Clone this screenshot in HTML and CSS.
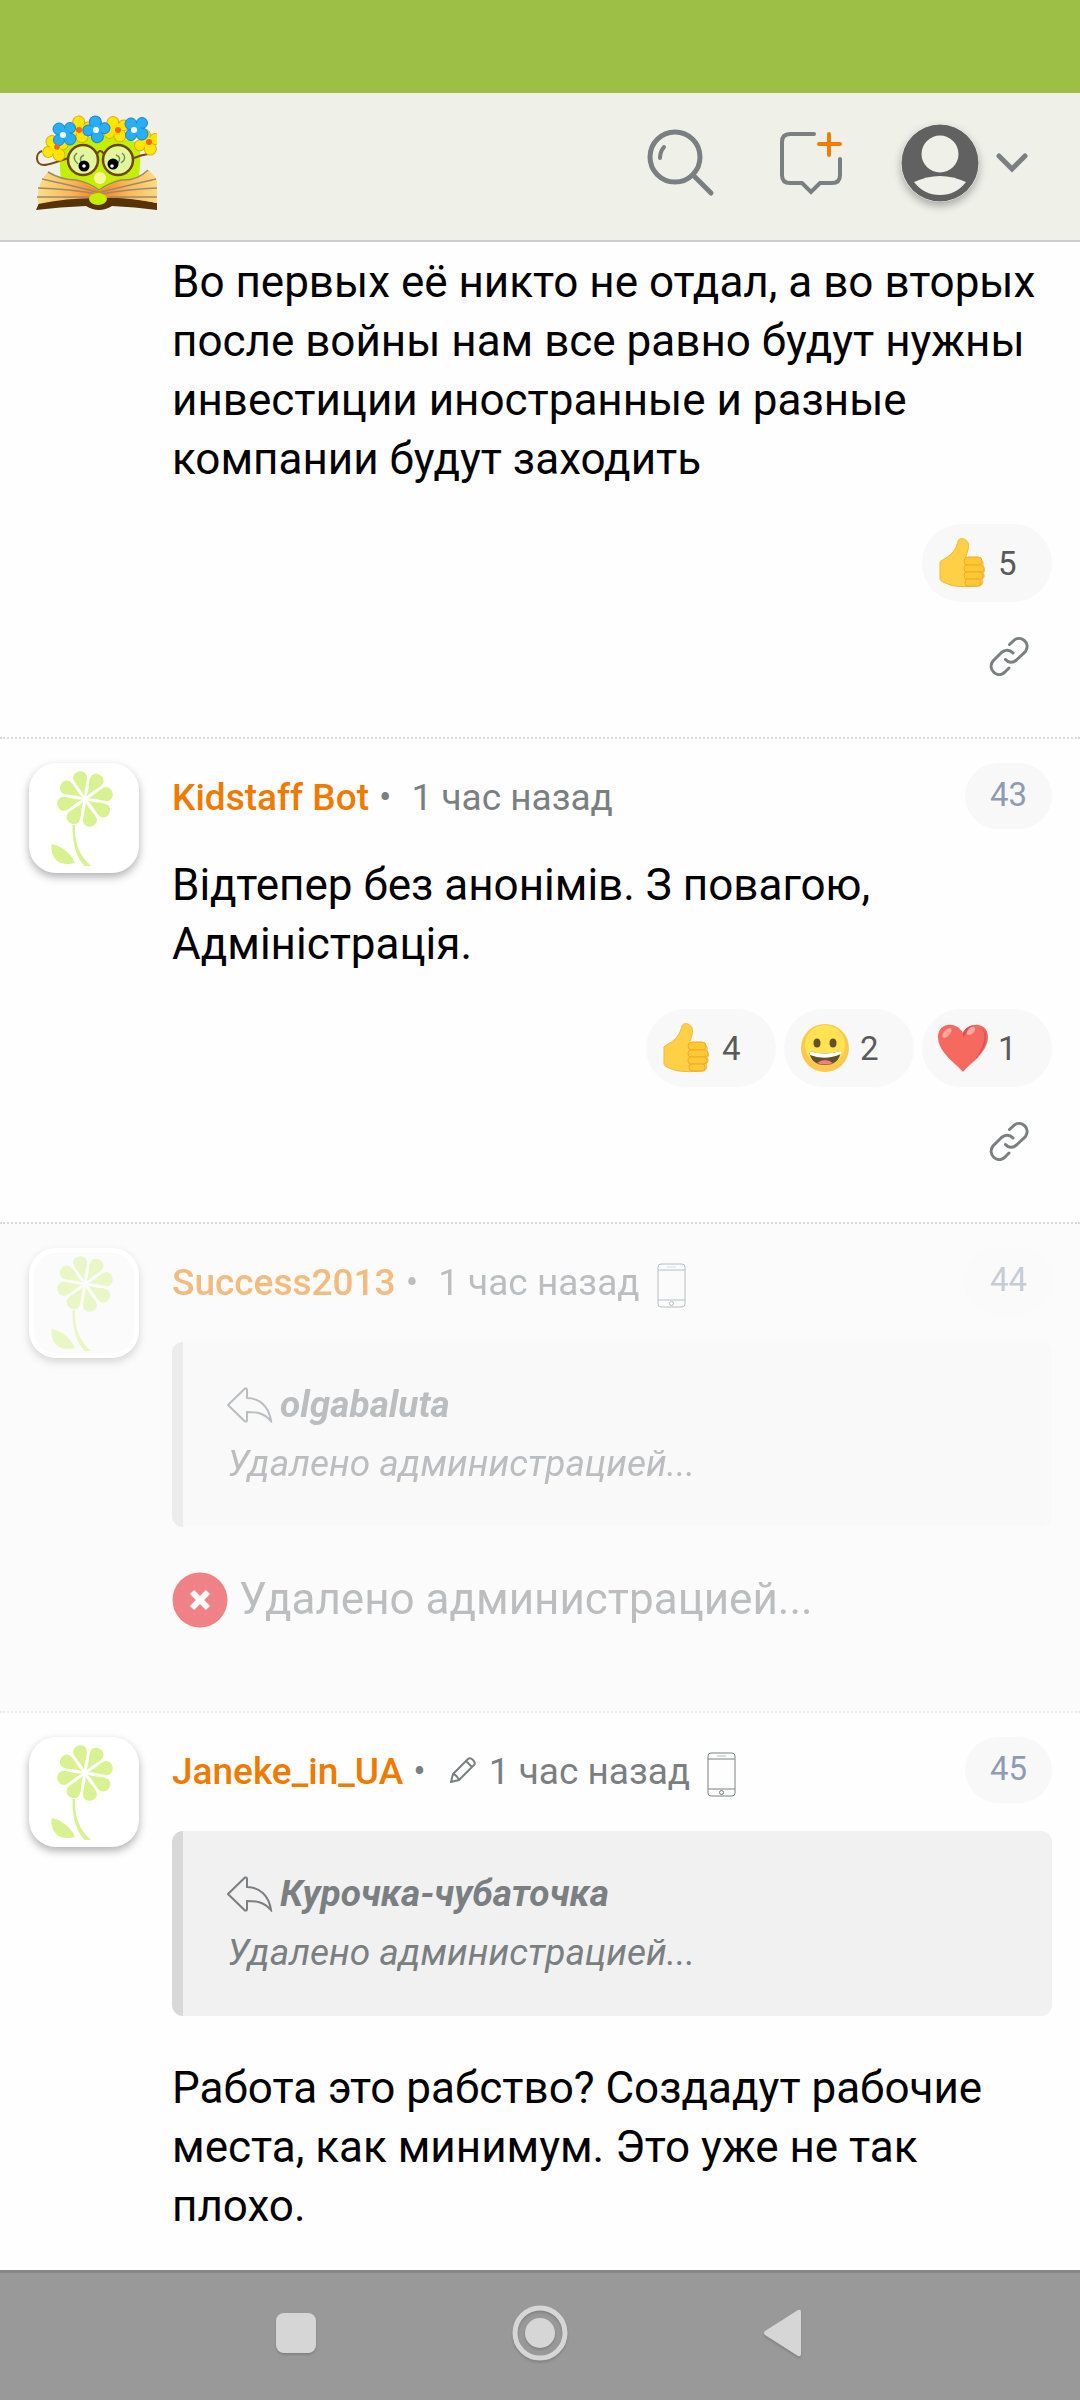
FILE: index.html
```
<!DOCTYPE html>
<html lang="ru">
<head>
    <meta charset="UTF-8">
    <meta name="viewport" content="width=device-width, initial-scale=1.0">
    <title>Kidstaff — форум</title>
    <link rel="stylesheet" href="styles.css">
</head>
<body>
    <!-- общие иконки -->
    <svg class="sprite" aria-hidden="true">
        <symbol id="i-flower" viewBox="0 0 110 110">
            <g transform="rotate(-13 56 36)">
                <path id="petal" d="M56 33 C54 24 49 19 49 13 A7.300 7.300 0 0 1 63 13 C63 19 58 24 56 33Z"/>
                <use href="#petal" transform="rotate(45 56 36)"/>
                <use href="#petal" transform="rotate(90 56 36)"/>
                <use href="#petal" transform="rotate(135 56 36)"/>
                <use href="#petal" transform="rotate(180 56 36)"/>
                <use href="#petal" transform="rotate(225 56 36)"/>
                <use href="#petal" transform="rotate(270 56 36)"/>
                <use href="#petal" transform="rotate(315 56 36)"/>
            </g>
            <path d="M43.500 62 C43 82 48 95 55.500 103 H62 C51 93 45 80 46 62Z"/>
            <path d="M22.500 81 C34 83 43 92 46 100 C32 104 21 97 22.500 81Z"/>
        </symbol>
        <symbol id="i-link" viewBox="0 0 40 40">
            <path d="M20.500 8.500 L25.500 3.900 C32-1 42 7 36.500 15.500 L27.500 24 C23.500 27.500 19 26.500 16.500 23.500 M24 17 C20.500 13.500 16 13.500 12.500 16.500 L4 25 C-2 33 8 43 15.500 36.500 L20 32"/>
        </symbol>
        <symbol id="i-thumb" viewBox="0 0 48 50">
            <path d="M1 24 C4 21 8 20 11 17 C16 13 18 7 19 3 C20-1 29 0 29.500 7 C30 12 27 17 26 22 H40 C45 22 45 27 43 28 C46 30 46 34 44 35 C46 37 45 40 43 41 C45 44 43 48 40 48 C28 49 14 49 9 46 C3 44 1 43 1 40Z" fill="#ffd046" stroke="#f3b93c" stroke-width="1"/>
            <g fill="#ffc832" stroke="#edac2e" stroke-width="1">
                <rect x="25" y="19" width="18" height="8" rx="4"/>
                <rect x="25" y="27" width="20" height="7" rx="3"/>
                <rect x="25" y="34" width="19" height="7" rx="3"/>
                <rect x="26" y="41" width="16" height="7" rx="3"/>
            </g>
        </symbol>
        <symbol id="i-phone" viewBox="0 0 30 46">
            <rect x="1" y="1" width="27" height="43" rx="3"/>
            <path d="M1 7 H28 M1 37 H28"/>
            <path d="M10 4 H19" opacity=".5"/>
            <circle cx="14.500" cy="40.500" r="2"/>
        </symbol>
        <symbol id="i-reply" viewBox="0 0 46 36">
            <path d="M1 18 L18 1.500 Q20 1 20 3 V11 C33 11 42 20 44 34 C37 26 30 25 20 25 V33 Q20 35 18 34.500Z"/>
        </symbol>
    </svg>

    <div class="status-bar"></div>

    <header class="header">
        <a class="logo" href="#" aria-label="Kidstaff">
            <svg viewBox="0 0 122 96">
                <defs>
                    <radialGradient id="pages" gradientUnits="userSpaceOnUse" cx="64" cy="78" r="60">
                        <stop offset="0" stop-color="#ff7a18"/>
                        <stop offset=".5" stop-color="#fbb95c"/>
                        <stop offset="1" stop-color="#fbdc84"/>
                    </radialGradient>
                    <g id="fl">
                        <circle cx="-5" cy="-5" r="6"/><circle cx="6" cy="-6" r="5.500"/>
                        <circle cx="-5" cy="6" r="5.500"/><circle cx="6" cy="5" r="6"/>
                        <circle r="5.500" stroke="none"/>
                    </g>
                </defs>
                <path d="M25 28 Q64 14 104 28 Q107 45 103 66 L65 84 L26 66 Q24 45 25 28Z" fill="#c3f000"/>
                <path d="M7 36 C0 38 0 50 9 50 Q14 50 33 43 M99 43 Q106 40 113 39" fill="none" stroke="#7a4a14" stroke-width="2"/>
                <path d="M1 95 L4 88 Q25 83 55 82 H75 Q100 83 122 88 V95 Q100 92 77 91 Q64 99 51 91 Q25 92 1 95Z" fill="#563408"/>
                <path d="M13 57 Q26 63 41 65 Q55 70 64 76 Q74 70 86 65 Q102 64 113 55 Q119 59 122 65 V88 Q90 82 64 83 Q30 83 3 89 Q1 69 13 57Z" fill="url(#pages)"/>
                <path d="M13 57 Q26 65 41 65 Q55 68 64 75 Q74 68 86 65 Q102 66 113 55 M7 64 Q35 70 62 77 M3 73 Q35 74 62 79 M2 82 H56 M66 77 Q95 70 121 64 M66 79 Q95 74 122 73 M74 82 H122" fill="none" stroke="#9b8b6c" stroke-width="1.500"/>
                <ellipse cx="63" cy="84" rx="9" ry="6" fill="#c3f000"/>
                <circle cx="65" cy="63" r="6" fill="#fff49a"/>
                <g fill="#e2f79b" stroke="#6f4510" stroke-width="2.500">
                    <circle cx="48" cy="45" r="15"/><circle cx="83" cy="45" r="15"/>
                </g>
                <path d="M62 39 Q65 33 69 39" fill="none" stroke="#6f4510" stroke-width="2"/>
                <path d="M42 38 Q36 43 43 49 M49 40 Q43 43 47 48 M81 40 Q87 42 83 48 M87 38 Q93 43 86 48" fill="none" stroke="#72895c" stroke-width="1.500"/>
                <circle cx="49" cy="51" r="5.500"/><circle cx="78" cy="49" r="5.500"/>
                <circle cx="49" cy="51" r="1.800" fill="#fff"/><circle cx="77" cy="51" r="1.800" fill="#fff"/>
                <g fill="#ffe600" stroke="#d8b010" stroke-width="1">
                    <use href="#fl" x="20" y="33" transform="rotate(20 20 33)"/>
                    <use href="#fl" x="45" y="14" transform="rotate(35 45 14)"/>
                    <use href="#fl" x="81" y="14" transform="rotate(20 81 14)"/>
                    <use href="#fl" x="112" y="27" transform="rotate(25 112 27)"/>
                </g>
                <g fill="#27aef5" stroke="#1c86cf" stroke-width="1">
                    <use href="#fl" x="29" y="19"/>
                    <use href="#fl" x="61" y="14" transform="rotate(40 61 14)"/>
                    <use href="#fl" x="101" y="14"/>
                </g>
                <g fill="#ff6410">
                    <circle cx="22" cy="32" r="2.800"/><circle cx="44" cy="15" r="3"/><circle cx="83" cy="15" r="3"/><circle cx="114" cy="27" r="3"/>
                </g>
                <g fill="#fff">
                    <circle cx="28" cy="20" r="3"/><circle cx="61" cy="15" r="3"/><circle cx="99" cy="15" r="3"/>
                </g>
            </svg>
        </a>
        <nav class="header-actions">
            <button class="icon-button" aria-label="Поиск">
                <svg width="68" height="68" viewBox="0 0 68 68" fill="none" stroke="#7a7f82" stroke-width="5" stroke-linecap="round">
                    <circle cx="28" cy="28" r="25"/>
                    <path d="M46 46 L64 64"/>
                    <path d="M17 18 Q13 23 13 29" stroke-width="4"/>
                </svg>
            </button>
            <button class="icon-button" aria-label="Новая тема">
                <svg width="64" height="64" viewBox="0 0 64 64" fill="none" stroke="#7a7f82" stroke-width="4" stroke-linecap="round">
                    <path d="M35 3 H11 Q3 3 3 11 V44 Q3 52 11 52 H23 L32 61 L41 52 H53 Q61 52 61 44 V28"/>
                    <path d="M40 13 H61 M50 3 V24" stroke="#f07d00"/>
                </svg>
            </button>
            <button class="icon-button profile" aria-label="Профиль">
                <svg class="profile-pic" width="78" height="78" viewBox="0 0 78 78">
                    <circle cx="39" cy="39" r="38.500" fill="#616161"/>
                    <circle cx="39" cy="30" r="18.500" fill="#eff0e8"/>
                    <path d="M13 58 Q39 46 65 58 Q55 71 39 71 Q23 71 13 58Z" fill="#eff0e8"/>
                </svg>
                <svg width="32" height="20" viewBox="0 0 32 20" fill="none" stroke="#7a7f82" stroke-width="5" stroke-linecap="round">
                    <path d="M3 3 L16 16 L29 3"/>
                </svg>
            </button>
        </nav>
    </header>

    <main class="thread">
        <article class="post post-first">
            <div class="post-content">
                <p class="post-text">Во первых её никто не отдал, а во вторых после войны нам все равно будут нужны инвестиции иностранные и разные компании будут заходить</p>
                <div class="reactions">
                    <button class="reaction"><svg class="emoji"><use href="#i-thumb"/></svg>5</button>
                </div>
                <div class="post-tools">
                    <a class="permalink" href="#42" aria-label="Ссылка"><svg><use href="#i-link"/></svg></a>
                </div>
            </div>
        </article>

        <article class="post" id="43">
            <a class="avatar" href="#"><svg><use href="#i-flower"/></svg></a>
            <div class="post-content">
                <div class="post-head">
                    <a class="author" href="#">Kidstaff Bot</a>
                    <span class="dot">•</span>
                    <span class="date">1 час назад</span>
                    <a class="number" href="#43">43</a>
                </div>
                <p class="post-text">Відтепер без анонімів. З повагою, Адміністрація.</p>
                <div class="reactions">
                    <button class="reaction"><svg class="emoji"><use href="#i-thumb"/></svg>4</button>
                    <button class="reaction">
                        <svg class="emoji" viewBox="0 0 50 50">
                            <circle cx="25" cy="25" r="24" fill="#fbc94b"/>
                            <circle cx="25" cy="22" r="20" fill="#ffe352"/>
                            <ellipse cx="17" cy="20" rx="3.500" ry="4.500" fill="#63502b"/>
                            <ellipse cx="33" cy="20" rx="3.500" ry="4.500" fill="#63502b"/>
                            <path d="M9 28 Q25 33 41 28 Q39 42 25 42 Q11 42 9 28Z" fill="#63502b"/>
                            <path d="M9 28 Q25 33 41 28 V31 Q25 38 10 32Z" fill="#fff"/>
                            <path d="M17 40 Q25 34 33 40 Q25 43 17 40Z" fill="#f08080"/>
                        </svg>2
                    </button>
                    <button class="reaction">
                        <svg class="emoji" viewBox="0 0 50 50">
                            <path d="M25 49 C20 42 0 30 0 14 C0-1 19-2 25 10 C31-2 50-1 50 14 C50 30 30 42 25 49Z" fill="#f5695f"/>
                            <path d="M25 10 C27 5 31 3 35 2 C31 6 28 10 25 15Z M44 4 C54 15 44 30 35 39 C43 29 50 16 44 4Z" fill="#d9535a"/>
                            <ellipse cx="9" cy="10" rx="3" ry="6" fill="#ffa59b" transform="rotate(42 9 10)"/>
                            <ellipse cx="33" cy="8" rx="3" ry="5" fill="#ffa59b" transform="rotate(50 33 8)"/>
                        </svg>1
                    </button>
                </div>
                <div class="post-tools">
                    <a class="permalink" href="#43" aria-label="Ссылка"><svg><use href="#i-link"/></svg></a>
                </div>
            </div>
        </article>

        <article class="post post-deleted" id="44">
            <a class="avatar" href="#"><svg><use href="#i-flower"/></svg></a>
            <div class="post-content">
                <div class="post-head">
                    <a class="author" href="#">Success2013</a>
                    <span class="dot">•</span>
                    <span class="date">1 час назад</span>
                    <svg class="phone"><use href="#i-phone"/></svg>
                    <a class="number" href="#44">44</a>
                </div>
                <blockquote class="quote">
                    <div class="quote-author"><svg><use href="#i-reply"/></svg>olgabaluta</div>
                    <p>Удалено администрацией...</p>
                </blockquote>
                <p class="post-text removed">
                    <svg width="56" height="56" viewBox="0 0 56 56">
                        <circle cx="28" cy="28" r="27.500" fill="#e30613"/>
                        <path d="M20 20 L36 36 M36 20 L20 36" stroke="#fff" stroke-width="6"/>
                    </svg>
                    Удалено администрацией...
                </p>
            </div>
        </article>

        <article class="post" id="45">
            <a class="avatar" href="#"><svg><use href="#i-flower"/></svg></a>
            <div class="post-content">
                <div class="post-head">
                    <a class="author" href="#">Janeke_in_UA</a>
                    <span class="dot">•</span>
                    <svg class="pencil" viewBox="0 0 26 26"><path d="M1 25 L3 17 L18 2 Q20 0 23 3 Q26 6 24 8 L9 23Z M3 17 Q7 18 9 23 M16 4 L22 10"/></svg>
                    <span class="date">1 час назад</span>
                    <svg class="phone"><use href="#i-phone"/></svg>
                    <a class="number" href="#45">45</a>
                </div>
                <blockquote class="quote">
                    <div class="quote-author"><svg><use href="#i-reply"/></svg>Курочка-чубаточка</div>
                    <p>Удалено администрацией...</p>
                </blockquote>
                <p class="post-text">Работа это рабство? Создадут рабочие места, как минимум. Это уже не так плохо.</p>
            </div>
        </article>
    </main>

    <!-- системная навигация -->
    <nav class="system-nav">
        <button aria-label="Недавние">
            <svg width="56" height="56" viewBox="0 0 56 56"><rect x="8" y="8" width="40" height="40" rx="8"/></svg>
        </button>
        <button aria-label="Домой">
            <svg width="56" height="56" viewBox="0 0 56 56"><circle cx="28" cy="28" r="25" fill="none" stroke="#d6d6d6" stroke-width="5"/><circle cx="28" cy="28" r="15"/></svg>
        </button>
        <button aria-label="Назад">
            <svg width="56" height="56" viewBox="0 0 56 56"><path d="M9 26 L42 5 Q45 4 45 7 V49 Q45 52 42 51 L9 30 Q7 28 9 26Z"/></svg>
        </button>
    </nav>
</body>
</html>
```

FILE: styles.css
```
* {
    box-sizing: border-box;
}
body {
    margin: 0;
    height: 100vh;
    display: flex;
    flex-direction: column;
    background: #fefefe;
    color: #000;
    font-family: Roboto, "Noto Sans", sans-serif;
    font-size: 44px;
    line-height: 59px;
}
a {
    color: inherit;
    text-decoration: none;
}
button {
    border: none;
    padding: 0;
    background: none;
    font-family: inherit;
    cursor: pointer;
}
svg {
    display: block;
    flex: none;
}
p {
    margin: 0;
}
.sprite {
    position: absolute;
    width: 0;
    height: 0;
}

/* шапка */
.status-bar {
    flex: none;
    height: 93px;
    background: #9dbf45;
}
.header {
    flex: none;
    display: flex;
    justify-content: space-between;
    align-items: center;
    height: 149px;
    padding: 0 52px 8px 35px;
    background: #eff0e8;
    border-bottom: 2px solid #ccc;
}
.logo svg {
    width: 122px;
    height: 96px;
}
.header-actions {
    display: flex;
    align-items: center;
    gap: 64px;
}
.icon-button {
    display: flex;
    align-items: center;
    gap: 17px;
}
.profile {
    margin-left: -6px;
}
.profile-pic {
    border-radius: 50%;
    box-shadow: 0 4px 8px rgba(0, 0, 0, 0.3);
}

/* сообщения */
.thread {
    flex: 1;
    min-height: 0;
    overflow: hidden;
}
.post {
    display: flex;
    gap: 33px;
    padding: 24px 28px 46px 29px;
    border-bottom: 2px dotted #d9d9d9;
}
.post-first {
    padding: 11px 28px 46px 172px;
}
.post-content {
    flex: 1;
    min-width: 0;
}
.avatar {
    flex: none;
    width: 110px;
    height: 110px;
    border-radius: 27px;
    background: #fff;
    box-shadow: 0 4px 8px rgba(0, 0, 0, 0.3);
}
.avatar svg {
    width: 110px;
    height: 110px;
    fill: #d8f291;
}
.post-head {
    display: flex;
    align-items: center;
    height: 66px;
    color: #7a7f82;
    font-size: 37px;
    line-height: 64px;
}
.author,
.dot,
.date {
    padding-top: 4px;
}
.author {
    color: #ef7a00;
    font-weight: 500;
}
.dot {
    margin: 0 20px 0 10px;
}
.phone {
    width: 30px;
    height: 46px;
    margin: 10px 0 0 17px;
    fill: none;
    stroke: #7a7f82;
    stroke-width: 1px;
}
.pencil {
    width: 26px;
    height: 26px;
    margin: 0 13px 0 4px;
    fill: none;
    stroke: #7a7f82;
    stroke-width: 2px;
}
.number {
    margin-left: auto;
    width: 87px;
    height: 66px;
    border-radius: 33px;
    background: #f8f8f8;
    color: #8f9bb3;
    font-size: 33px;
    text-align: center;
}
.post-head + .post-text {
    margin-top: 27px;
}
.reactions {
    display: flex;
    justify-content: flex-end;
    gap: 8px;
    margin-top: 35px;
}
.reaction {
    display: flex;
    align-items: center;
    gap: 10px;
    width: 130px;
    height: 78px;
    padding-left: 16px;
    border-radius: 39px;
    background: #f8f8f8;
    color: #5a5a5a;
    font-size: 33px;
}
.emoji {
    width: 50px;
    height: 50px;
}
.post-tools {
    display: flex;
    justify-content: flex-end;
    padding: 34px 23px 15px 0;
}
.permalink svg {
    width: 40px;
    height: 40px;
    fill: none;
    stroke: #7a7f82;
    stroke-width: 3px;
    stroke-linecap: round;
    overflow: visible;
}
.quote {
    margin: 28px 0 43px;
    padding: 33px 44px 34px;
    border-left: 11px solid #d8d8d8;
    border-radius: 11px;
    background: #f1f1f1;
    color: #7a7f82;
    font-size: 37px;
    font-style: italic;
}
.quote-author {
    display: flex;
    align-items: center;
    gap: 7px;
    font-weight: 700;
}
.quote-author svg {
    width: 46px;
    height: 36px;
    fill: none;
    stroke: #7a7f82;
    stroke-width: 2px;
}

/* удалённое сообщение */
.post-deleted {
    background: #fbfbfb;
    border-bottom-color: #ececec;
    padding-bottom: 82px;
}
.post-deleted .post-content {
    opacity: 0.5;
}
.post-deleted .avatar {
    border: 5px solid #fff;
    background: #fbfbfb;
    box-shadow: 0 4px 8px rgba(0, 0, 0, 0.15);
}
.post-deleted .avatar svg {
    margin: -5px;
    opacity: 0.5;
}
.post-deleted .quote {
    background: #f6f6f6;
    border-left-color: #dcdcdc;
}
.removed {
    display: flex;
    align-items: center;
    gap: 11px;
    color: #7a7f82;
}

/* нижняя панель */
.system-nav {
    flex: none;
    display: flex;
    justify-content: center;
    align-items: center;
    gap: 188px;
    height: 130px;
    padding-bottom: 8px;
    background: #999;
    border-top: 3px solid #888;
}
.system-nav svg {
    fill: #d6d6d6;
    filter: drop-shadow(0 2px 1px rgba(0, 0, 0, 0.15));
}
```
